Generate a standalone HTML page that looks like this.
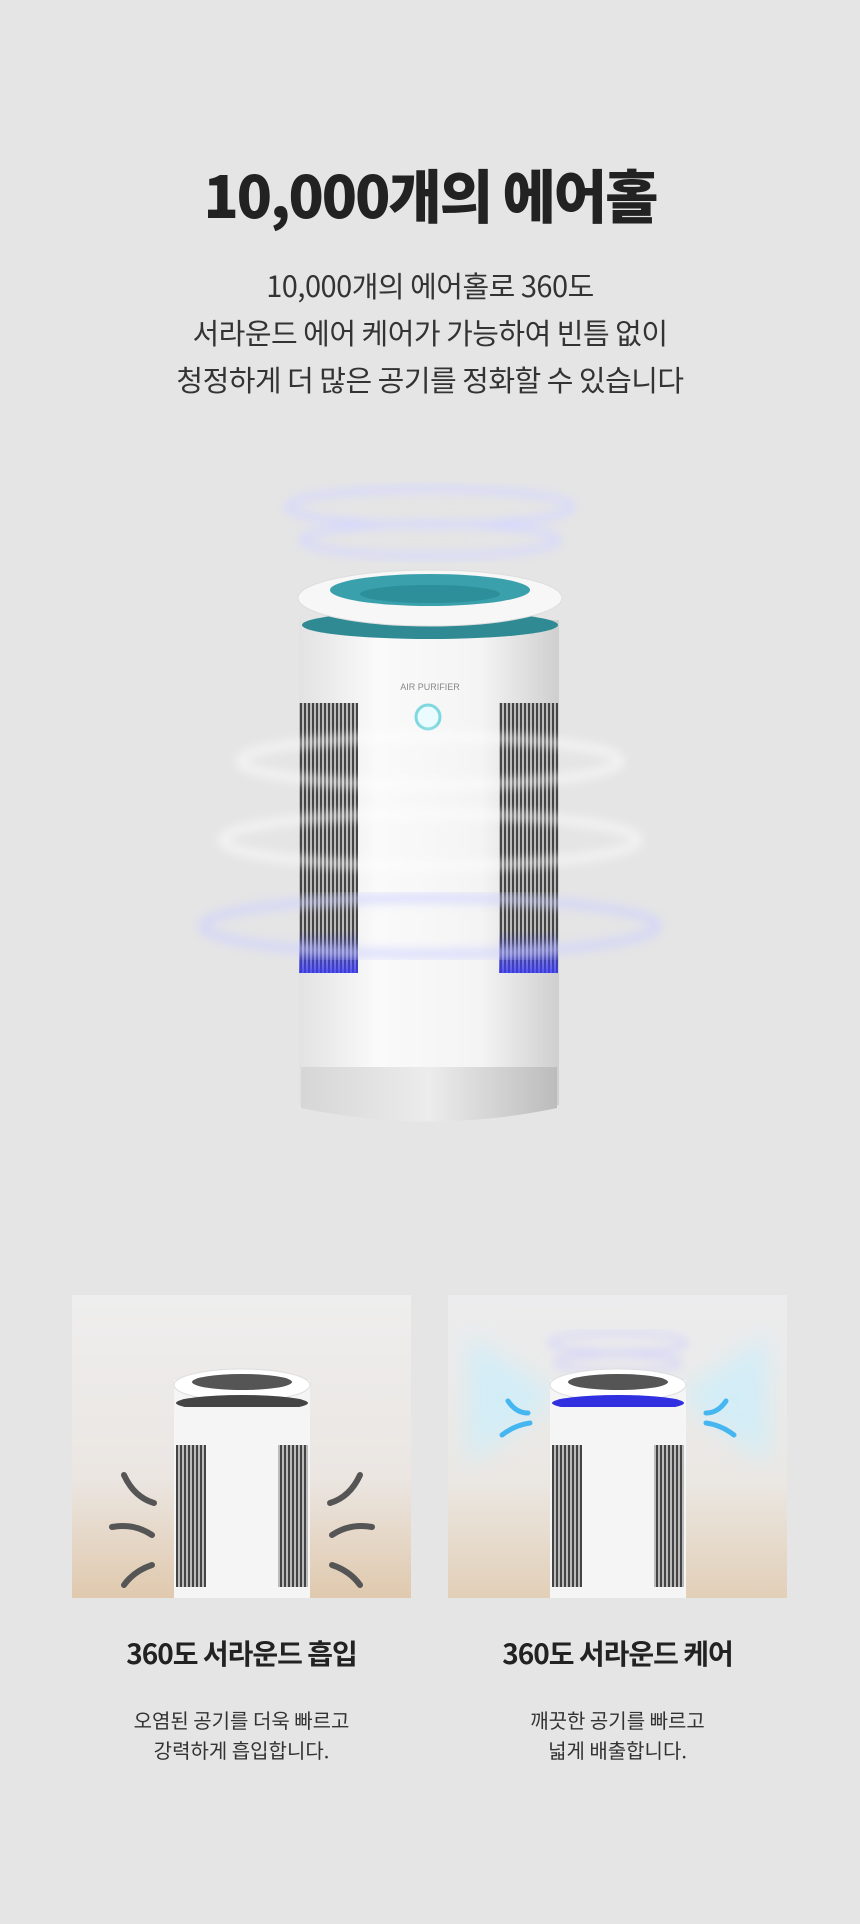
<!DOCTYPE html>
<html><head><meta charset="utf-8"><style>
*{margin:0;padding:0;box-sizing:border-box}
body{width:860px;height:1924px;background:#e5e5e5;font-family:"Noto Sans CJK KR","Liberation Sans",sans-serif;color:#222;position:relative;overflow:hidden}
.t{position:absolute;left:0;width:860px;text-align:center}
.sub{top:262px;font-size:29px;line-height:47px;color:#333;letter-spacing:-0.5px}
.h2{position:absolute;width:339px;text-align:center;font-weight:700;font-size:28px;top:1633px;letter-spacing:-1px}
.d{position:absolute;width:339px;text-align:center;font-size:20px;line-height:30px;top:1705px;color:#333}
</style></head><body>
<div class="t" style="top:148px;font-size:58px;font-weight:900;letter-spacing:-2px;line-height:90px">10,000개의 에어홀</div>
<div class="t sub">10,000개의 에어홀로 360도<br>서라운드 에어 케어가 가능하여 빈틈 없이<br>청정하게 더 많은 공기를 정화할 수 있습니다</div>

<svg style="position:absolute;left:0;top:460px" width="860" height="700" viewBox="0 460 860 700">
<defs>
<linearGradient id="body" x1="0" x2="1"><stop offset="0" stop-color="#e2e2e2"/><stop offset=".3" stop-color="#fafafa"/><stop offset=".7" stop-color="#f4f4f4"/><stop offset="1" stop-color="#cfcfcf"/></linearGradient>
<linearGradient id="base" x1="0" x2="1"><stop offset="0" stop-color="#d6d6d6"/><stop offset=".5" stop-color="#ececec"/><stop offset="1" stop-color="#bcbcbc"/></linearGradient>
<pattern id="gr" width="4" height="10" patternUnits="userSpaceOnUse"><rect width="4" height="10" fill="#bbb"/><rect width="2" height="10" fill="#444"/></pattern>
<linearGradient id="blue" x1="0" y1="0" x2="0" y2="1"><stop offset="0" stop-color="#4a4aff" stop-opacity="0"/><stop offset="1" stop-color="#3a3aff" stop-opacity=".8"/></linearGradient>
<filter id="bl"><feGaussianBlur stdDeviation="5"/></filter>
</defs>
<g fill="none" stroke="#d4d7ff" stroke-width="6" filter="url(#bl)">
<ellipse cx="430" cy="507" rx="142" ry="18"/><ellipse cx="430" cy="540" rx="128" ry="16"/>
</g>
<path d="M299 620 L559 620 L559 1105 Q430 1135 299 1105Z" fill="url(#body)"/>
<path d="M301 1067 L557 1067 L557 1108 Q430 1135 301 1108Z" fill="url(#base)"/>
<ellipse cx="430" cy="625" rx="128" ry="14" fill="#2f8a94"/>
<ellipse cx="430" cy="598" rx="132" ry="28" fill="#f7f7f7" stroke="#ddd"/>
<ellipse cx="430" cy="590" rx="100" ry="16" fill="#3aa0ac"/>
<ellipse cx="430" cy="594" rx="70" ry="9" fill="#2c8f9a"/>
<rect x="299" y="703" width="59" height="270" fill="url(#gr)"/>
<rect x="499" y="703" width="59" height="270" fill="url(#gr)"/>
<rect x="299" y="930" width="59" height="43" fill="url(#blue)"/>
<rect x="499" y="930" width="59" height="43" fill="url(#blue)"/>
<text x="430" y="690" text-anchor="middle" font-size="9" fill="#888" font-family="Liberation Sans">AIR PURIFIER</text>
<circle cx="428" cy="717" r="12" fill="#eafcff" stroke="#7fd8e0" stroke-width="3"/>
<g fill="none" stroke="#fff" stroke-width="8" opacity=".6" filter="url(#bl)">
<ellipse cx="430" cy="761" rx="190" ry="24"/><ellipse cx="430" cy="840" rx="208" ry="26"/>
</g>
<g fill="none" stroke="#cdd0ff" stroke-width="9" opacity=".7" filter="url(#bl)">
<ellipse cx="430" cy="926" rx="227" ry="28"/>
</g>
</svg>

<svg style="position:absolute;left:72px;top:1295px" width="339" height="303">
<defs><linearGradient id="g1" x1="0" y1="0" x2="0" y2="1"><stop offset="0" stop-color="#eeeeee"/><stop offset=".6" stop-color="#ebe6e2"/><stop offset="1" stop-color="#e0c9ae"/></linearGradient></defs>
<rect width="339" height="303" fill="url(#g1)"/>
<rect x="102" y="85" width="136" height="218" fill="#f5f5f5"/>
<ellipse cx="170" cy="90" rx="68" ry="16" fill="#fff" stroke="#ddd"/><ellipse cx="170" cy="87" rx="50" ry="8" fill="#555"/>
<ellipse cx="170" cy="108" rx="66" ry="8" fill="#444"/><rect x="102" y="112" width="136" height="30" fill="#f5f5f5"/>
<rect x="104" y="150" width="30" height="142" fill="url(#gr)"/><rect x="206" y="150" width="30" height="142" fill="url(#gr)"/>
<g fill="none" stroke="#555" stroke-width="6" stroke-linecap="round"><path d="M52 180 q10 22 30 28"/><path d="M40 232 q22 -4 40 8"/><path d="M52 290 q10 -14 28 -20"/><path d="M288 180 q-10 22 -30 28"/><path d="M300 232 q-22 -4 -40 8"/><path d="M288 290 q-10 -14 -28 -20"/></g>
</svg>
<svg style="position:absolute;left:448px;top:1295px" width="339" height="303">
<defs><linearGradient id="g2" x1="0" y1="0" x2="0" y2="1"><stop offset="0" stop-color="#ececee"/><stop offset=".6" stop-color="#ebe8e4"/><stop offset="1" stop-color="#e2cfb8"/></linearGradient>
<filter id="b3"><feGaussianBlur stdDeviation="12"/></filter></defs>
<rect width="339" height="303" fill="url(#g2)"/>
<g fill="#cdeefa" filter="url(#b3)" opacity=".8"><path d="M20 40 L110 100 L20 170Z"/><path d="M320 40 L230 100 L320 170Z"/></g>
<g fill="none" stroke="#c8c8ff" stroke-width="3" filter="url(#bl)"><ellipse cx="170" cy="48" rx="68" ry="10"/><ellipse cx="170" cy="68" rx="62" ry="9"/></g>
<rect x="102" y="85" width="136" height="218" fill="#f5f5f5"/>
<ellipse cx="170" cy="90" rx="68" ry="16" fill="#fff" stroke="#ddd"/><ellipse cx="170" cy="87" rx="50" ry="8" fill="#555"/>
<ellipse cx="170" cy="108" rx="66" ry="8" fill="#3030e0"/><rect x="102" y="112" width="136" height="30" fill="#f5f5f5"/>
<rect x="104" y="150" width="30" height="142" fill="url(#gr)"/><rect x="206" y="150" width="30" height="142" fill="url(#gr)"/>
<g fill="none" stroke="#45b6f0" stroke-width="5" stroke-linecap="round"><path d="M80 118 q-12 0 -20 -12"/><path d="M82 128 q-15 2 -28 12"/><path d="M258 118 q12 0 20 -12"/><path d="M258 128 q15 2 28 12"/></g>
</svg>
<div class="h2" style="left:72px">360도 서라운드 흡입</div>
<div class="h2" style="left:448px">360도 서라운드 케어</div>
<div class="d" style="left:72px">오염된 공기를 더욱 빠르고<br>강력하게 흡입합니다.</div>
<div class="d" style="left:448px">깨끗한 공기를 빠르고<br>넓게 배출합니다.</div>
</body></html>
